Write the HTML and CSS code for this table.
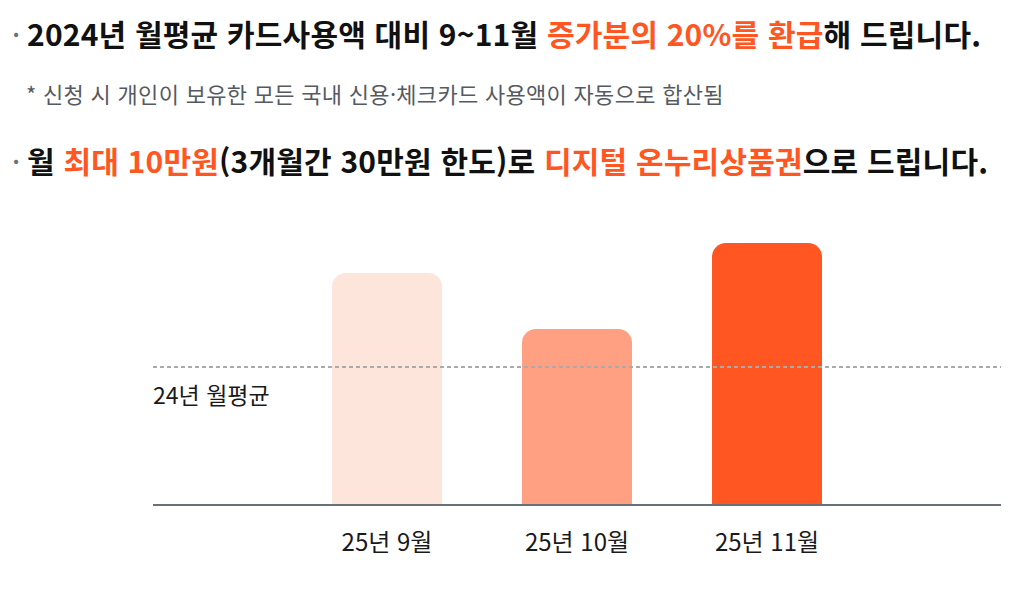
FILE: index.html
```html
<!DOCTYPE html>
<html lang="ko">
<head>
<meta charset="utf-8">
<link rel="stylesheet" href="styles.css">
</head>
<body>
<div class="page">
  <div class="item">
    <span class="dot">·</span>
    <h2 class="head">2024년 월평균 카드사용액 대비 9~11월 <em>증가분의 20%를 환급</em>해 드립니다.</h2>
  </div>
  <p class="note">* 신청 시 개인이 보유한 모든 국내 신용·체크카드 사용액이 자동으로 합산됨</p>
  <div class="item item-second">
    <span class="dot">·</span>
    <h2 class="head">월 <em>최대 10만원</em>(3개월간 30만원 한도)로 <em>디지털 온누리상품권</em>으로 드립니다.</h2>
  </div>

  <div class="chart">
    <div class="plot">
      <div class="avg-line"></div>
      <div class="avg-label">24년 월평균</div>
      <div class="bar bar-1" style="height:231px"></div>
      <div class="bar bar-2" style="height:175px"></div>
      <div class="bar bar-3" style="height:261px"></div>
    </div>
    <div class="labels">
      <span class="label">25년 9월</span>
      <span class="label">25년 10월</span>
      <span class="label">25년 11월</span>
    </div>
  </div>
</div>
</body>
</html>
```

FILE: styles.css
```css
* { box-sizing: border-box; }
html, body { margin: 0; padding: 0; background: #fff; }
body {
  font-family: "Noto Sans CJK KR", "Noto Sans", sans-serif;
  color: #111;
}
.page {
  width: 1025px;
  height: 590px;
  padding: 13px 0 0 10px;
}
.item {
  display: flex;
  align-items: center;
  gap: 5px;
  height: 40px;
}
.item-second { margin-top: 32px; }
.dot {
  color: #6b6f78;
  font-size: 22px;
  font-weight: 700;
  width: 12px;
  text-align: center;
}
.head {
  margin: 0;
  font-size: 30px;
  line-height: 40px;
  font-weight: 700;
  letter-spacing: 0.2px;
  color: #111;
  white-space: nowrap;
}
.head em { font-style: normal; color: #ff5622; }
.note {
  margin: 25px 0 0 16px;
  font-size: 22px;
  color: #555a62;
  line-height: 30px;
  letter-spacing: 0.3px;
  white-space: nowrap;
}
.chart {
  margin: 63px 0 0 143px;
  width: 848px;
}
.plot {
  position: relative;
  height: 263px;
  display: flex;
  align-items: flex-end;
  gap: 80px;
  padding-left: 179px;
  border-bottom: 2px solid #6b6f78;
}
.bar {
  width: 110px;
  border-radius: 14px 14px 0 0;
}
.bar-1 { background: #fde5dc; }
.bar-2 { background: #ffa083; }
.bar-3 { background: #ff5622; }
.avg-line {
  position: absolute;
  left: 0;
  right: 0;
  top: 123px;
  height: 2px;
  background: repeating-linear-gradient(90deg, #aaaaaa 0 4px, transparent 4px 7px);
  z-index: 1;
}
.avg-label {
  position: absolute;
  left: 0;
  top: 136px;
  font-size: 23px;
  line-height: 30px;
  color: #1a1a1a;
}
.labels {
  display: flex;
  gap: 80px;
  padding-left: 179px;
  margin-top: 20px;
}
.label {
  width: 110px;
  text-align: center;
  font-size: 24px;
  line-height: 30px;
  color: #1a1a1a;
}
```
